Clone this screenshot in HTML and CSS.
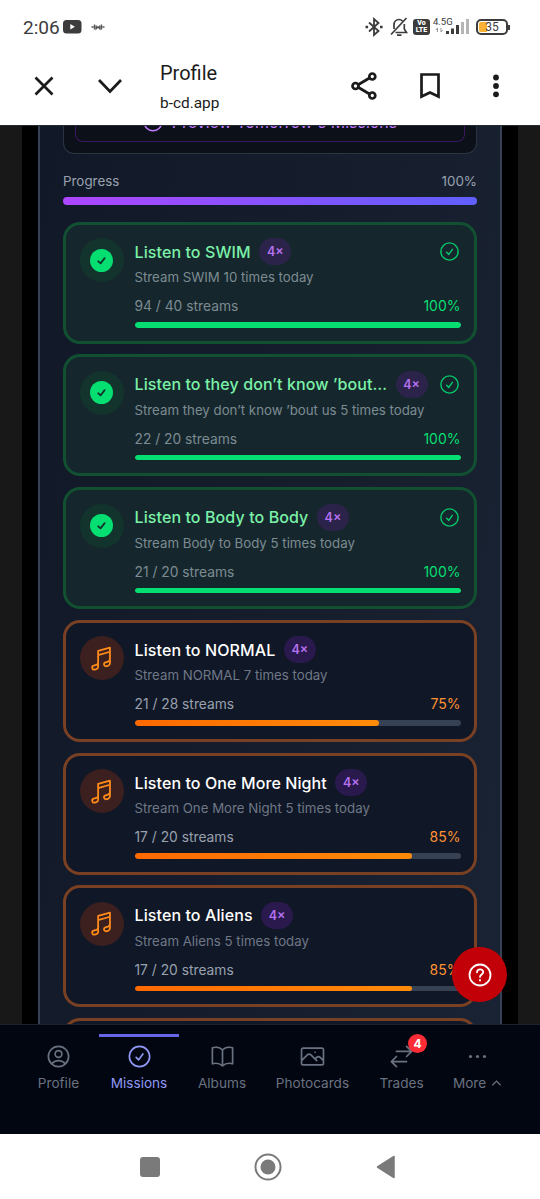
FILE: index.html
```html
<!DOCTYPE html>
<html lang="en">
  <head>
    <meta charset="UTF-8" />
    <meta name="viewport" content="width=device-width, initial-scale=1.0" />
    <title>Profile</title>
    <link rel="stylesheet" href="styles.css">
  </head>
  <body>
    <!-- shared icons -->
    <svg class="defs" width="0" height="0">
      <symbol id="check-circle" viewBox="0 0 24 24">
        <path d="M9 12.75 11.25 15 15 9.75M21 12a9 9 0 1 1-18 0 9 9 0 0 1 18 0Z" />
      </symbol>
      <symbol id="check-solid" viewBox="0 0 24 24">
        <circle cx="12" cy="12" r="12" fill="#05df72" stroke="none" />
        <path d="M8.5 12.8 11 15 15.3 9.5" fill="none" stroke="#12312b" stroke-width="1.8" />
      </symbol>
      <symbol id="music" viewBox="0 0 24 24">
        <path d="m9 9 10.5-3m0 6.553v3.75a2.25 2.25 0 0 1-1.632 2.163l-1.32.377a1.803 1.803 0 1 1-.99-3.467l2.31-.66a2.25 2.25 0 0 0 1.632-2.163Zm0 0V2.25L9 5.25v10.303m0 0v3.75a2.25 2.25 0 0 1-1.632 2.163l-1.32.377a1.803 1.803 0 0 1-.99-3.467l2.31-.66A2.25 2.25 0 0 0 9 15.553Z" />
      </symbol>
    </svg>

    <header class="status-bar">
      <span class="clock">2:06</span>
      <svg class="youtube" width="19" height="14" viewBox="0 0 19 14"><rect width="18.5" height="13.5" rx="3.5" fill="#3c3c3c" /><path d="M7.3 4v5.6l4.6-2.8z" fill="#fff" /></svg>
      <svg class="buds" width="14" height="8" viewBox="0 0 14 8" fill="none" stroke="#555" stroke-width="1.4"><path d="M.5 4h2M11.5 4h2M3.5 1.5v5M5.2 2.5v3.2L7 3.8l1.8 1.9V2.5M10.5 1.5v5" /></svg>
      <div class="status-icons">
        <svg width="18" height="20" viewBox="0 0 18 20" fill="none" stroke="#3c3c3c" stroke-width="1.8"><path d="M4 5.5 13.5 14 9 18V2l4.5 4L4 14.5" /><path d="M.5 10h2.6M15 10h2.6" stroke-width="2.4" /></svg>
        <svg class="bell" width="18" height="20" viewBox="0 0 18 20" fill="none" stroke="#3c3c3c" stroke-width="1.7"><path d="M1 17.5 16.5 1M4 12V8c0-3 2-5.5 5-5.5 1.5 0 2.5.5 3.500 1.500M14.300 7v5l2.200 3.500H5.500M7 18.200h4.500" /></svg>
        <span class="volte"><span>Vo</span><span>LTE</span></span>
        <div class="signal">
          <span>4.5G</span>
          <svg width="36" height="16" viewBox="0 0 36 16"><path d="M3.500 13V9M2 11l1.500-2M7 9v4l1.500-2" fill="none" stroke="#999" /><path d="M12 12h3v3h-3zM17 9.500h3V15h-3zM22 6h3v9h-3z" fill="#3c3c3c" /><path d="M27 3h3v12h-3zM32 0h3v15h-3z" fill="#b5b5b5" /></svg>
        </div>
        <div class="battery"><span>35</span></div>
      </div>
    </header>

    <nav class="browser-bar">
      <svg class="close" width="20" height="20" viewBox="0 0 20 20"><path d="m1.500 1.500 17 17m0-17-17 17" /></svg>
      <svg class="collapse" width="26" height="16" viewBox="0 0 26 16"><path d="m2 2 11 11.500L24 2" /></svg>
      <div class="page-info">
        <div class="page-title">Profile</div>
        <div class="page-url">b-cd.app</div>
      </div>
      <svg class="share" width="27" height="28" viewBox="0 0 27 28"><path d="M5 14 21 4.500M5 14l16 9.500" /><g fill="#fff"><circle cx="4.500" cy="14" r="3" /><circle cx="21.300" cy="4.500" r="3" /><circle cx="21.300" cy="23.500" r="3" /></g></svg>
      <svg class="bookmark" width="20" height="26" viewBox="0 0 20 26"><path d="M1.500 1.500h17v22L10 19.500l-8.500 4z" /></svg>
      <svg class="menu" width="6" height="24" viewBox="0 0 6 24"><g fill="#1b1b1b" stroke="none"><circle cx="3" cy="3.500" r="2.900" /><circle cx="3" cy="12" r="2.900" /><circle cx="3" cy="20.300" r="2.900" /></g></svg>
    </nav>

    <main class="app">
      <div class="panel">
        <div class="preview-box">
          <div class="preview-button">
            <svg width="20" height="20" viewBox="0 0 20 20" fill="none" stroke="#c27aff" stroke-width="1.500"><circle cx="10" cy="10" r="8.800" /><path d="M10 5v5l3 2" /></svg>
            <span>Preview Tomorrow's Missions</span>
          </div>
        </div>

        <div class="progress-head"><span>Progress</span><span>100%</span></div>
        <div class="progress-total"></div>

        <section class="missions">
          <article class="card done">
            <div class="icon"><svg><use href="#check-solid" /></svg></div>
            <div class="body">
              <div class="title-row"><h3>Listen to SWIM</h3><span class="times">4×</span><svg class="status"><use href="#check-circle" /></svg></div>
              <p>Stream SWIM 10 times today</p>
              <div class="stats"><span>94 / 40 streams</span><b>100%</b></div>
              <div class="bar"><div style="width: 100%"></div></div>
            </div>
          </article>
          <article class="card done">
            <div class="icon"><svg><use href="#check-solid" /></svg></div>
            <div class="body">
              <div class="title-row"><h3>Listen to they don’t know ’bout…</h3><span class="times">4×</span><svg class="status"><use href="#check-circle" /></svg></div>
              <p>Stream they don’t know ’bout us 5 times today</p>
              <div class="stats"><span>22 / 20 streams</span><b>100%</b></div>
              <div class="bar"><div style="width: 100%"></div></div>
            </div>
          </article>
          <article class="card done">
            <div class="icon"><svg><use href="#check-solid" /></svg></div>
            <div class="body">
              <div class="title-row"><h3>Listen to Body to Body</h3><span class="times">4×</span><svg class="status"><use href="#check-circle" /></svg></div>
              <p>Stream Body to Body 5 times today</p>
              <div class="stats"><span>21 / 20 streams</span><b>100%</b></div>
              <div class="bar"><div style="width: 100%"></div></div>
            </div>
          </article>
          <article class="card">
            <div class="icon"><svg><use href="#music" /></svg></div>
            <div class="body">
              <div class="title-row"><h3>Listen to NORMAL</h3><span class="times">4×</span></div>
              <p>Stream NORMAL 7 times today</p>
              <div class="stats"><span>21 / 28 streams</span><b>75%</b></div>
              <div class="bar"><div style="width: 75%"></div></div>
            </div>
          </article>
          <article class="card">
            <div class="icon"><svg><use href="#music" /></svg></div>
            <div class="body">
              <div class="title-row"><h3>Listen to One More Night</h3><span class="times">4×</span></div>
              <p>Stream One More Night 5 times today</p>
              <div class="stats"><span>17 / 20 streams</span><b>85%</b></div>
              <div class="bar"><div style="width: 85%"></div></div>
            </div>
          </article>
          <article class="card">
            <div class="icon"><svg><use href="#music" /></svg></div>
            <div class="body">
              <div class="title-row"><h3>Listen to Aliens</h3><span class="times">4×</span></div>
              <p>Stream Aliens 5 times today</p>
              <div class="stats"><span>17 / 20 streams</span><b>85%</b></div>
              <div class="bar"><div style="width: 85%"></div></div>
            </div>
          </article>
          <article class="card"></article>
        </section>
      </div>
      <div class="help">
        <svg width="24" height="24" viewBox="0 0 24 24"><circle cx="12" cy="12" r="10.500" /><path d="M9 9.300c0-3.900 6.200-3.900 6.200-.3 0 2.500-3.200 2.500-3.200 4.900M12 17v.5" /></svg>
      </div>
    </main>

    <nav class="tabs">
      <div class="tab profile">
        <svg viewBox="0 0 24 24"><path d="M17.982 18.725A7.488 7.488 0 0 0 12 15.750a7.488 7.488 0 0 0-5.982 2.975m11.963 0a9 9 0 1 0-11.963 0m11.963 0A8.966 8.966 0 0 1 12 21a8.966 8.966 0 0 1-5.982-2.275M15 9.750a3 3 0 1 1-6 0 3 3 0 0 1 6 0Z" /></svg>
        <span>Profile</span>
      </div>
      <div class="tab missions-tab active">
        <svg><use href="#check-circle" /></svg>
        <span>Missions</span>
      </div>
      <div class="tab albums">
        <svg viewBox="0 0 24 24"><path d="M12 6.042A8.967 8.967 0 0 0 6 3.750c-1.052 0-2.062.18-3 .512v14.250A8.987 8.987 0 0 1 6 18c2.305 0 4.408.867 6 2.292m0-14.250a8.966 8.966 0 0 1 6-2.292c1.052 0 2.062.18 3 .512v14.250A8.987 8.987 0 0 0 18 18a8.967 8.967 0 0 0-6 2.292m0-14.250v14.250" /></svg>
        <span>Albums</span>
      </div>
      <div class="tab photocards">
        <svg viewBox="0 0 24 24"><path d="m2.250 15.750 5.159-5.159a2.250 2.250 0 0 1 3.182 0l5.159 5.159m-1.500-1.500 1.409-1.409a2.250 2.250 0 0 1 3.182 0l2.909 2.909m-18 3.750h16.500a1.500 1.500 0 0 0 1.500-1.500V6a1.500 1.500 0 0 0-1.500-1.500H3.750A1.500 1.500 0 0 0 2.250 6v12a1.500 1.500 0 0 0 1.500 1.500Zm10.500-11.250h.008v.008h-.008V8.250Z" /></svg>
        <span>Photocards</span>
      </div>
      <div class="tab trades">
        <svg viewBox="0 0 24 24"><path d="M7.500 21 3 16.500m0 0L7.500 12M3 16.500h13.500m0-13.500L21 7.500m0 0L16.500 12M21 7.500H7.500" /></svg>
        <span>Trades</span>
        <i class="count">4</i>
      </div>
      <div class="tab more">
        <svg viewBox="0 0 24 24"><g fill="#6a7282" stroke="none"><circle cx="5.800" cy="12" r="1.400" /><circle cx="12" cy="12" r="1.400" /><circle cx="18.200" cy="12" r="1.400" /></g></svg>
        <span>More <svg class="caret" viewBox="0 0 12 8"><path d="m1.500 6.500 4.500-4.500 4.500 4.500" /></svg></span>
      </div>
    </nav>

    <footer class="system-nav">
      <svg width="20" height="20" viewBox="0 0 20 20"><rect width="20" height="20" rx="3" fill="#7a7a7a" /></svg>
      <svg width="28" height="28" viewBox="0 0 28 28"><circle cx="14" cy="14" r="12.500" fill="none" stroke="#7a7a7a" stroke-width="2" /><circle cx="14" cy="14" r="7.500" fill="#7a7a7a" /></svg>
      <svg width="20" height="24" viewBox="0 0 20 24"><path d="M18 1.500v21L1.500 12z" fill="#7a7a7a" stroke="#7a7a7a" stroke-width="1.500" stroke-linejoin="round" /></svg>
    </footer>
  </body>
</html>
```
FILE: styles.css
```css
* {
  box-sizing: border-box;
}
body {
  margin: 0;
  width: 540px;
  height: 1199px;
  overflow: hidden;
  background: #fff;
  font-family: Inter, "Open Sans", sans-serif;
}
svg {
  display: block;
  flex: none;
}
.defs {
  position: absolute;
}

/* phone status bar */
.status-bar {
  height: 50px;
  padding: 4px 32px 0 23px;
  display: flex;
  align-items: center;
  font-family: Roboto, sans-serif;
  color: #3c3c3c;
}
.clock {
  width: 40px;
  font-size: 19px;
}
.buds {
  margin-left: 9px;
}
.status-icons {
  margin-left: auto;
  display: flex;
  align-items: center;
}
.bell {
  margin-left: 7px;
}
.volte {
  width: 17px;
  height: 16px;
  margin-left: 5px;
  border-radius: 3px;
  background: #3c3c3c;
  color: #fff;
  font-size: 7px;
  font-weight: 900;
  line-height: 7px;
  display: flex;
  flex-direction: column;
  align-items: center;
  justify-content: center;
}
.signal {
  position: relative;
  margin-left: 4px;
}
.signal span {
  position: absolute;
  left: -1px;
  top: -2px;
  font-size: 9.5px;
  line-height: 10px;
}
.battery {
  position: relative;
  width: 32px;
  height: 16px;
  margin-left: 6px;
  border: 2px solid #3c3c3c;
  border-radius: 5px;
  background: linear-gradient(90deg, #f9b233 9px, #fff 9px);
  background-clip: content-box;
  padding: 1px;
  font-size: 12px;
  line-height: 11px;
  text-align: center;
}
.battery::after {
  content: "";
  position: absolute;
  right: -4px;
  top: 4px;
  width: 2px;
  height: 5px;
  background: #3c3c3c;
}

/* in-app browser toolbar */
.browser-bar {
  height: 75px;
  padding: 0 41px 0 34px;
  display: flex;
  align-items: center;
  font-family: Roboto, sans-serif;
  color: #1b1b1b;
}
.browser-bar svg {
  fill: none;
  stroke: #1b1b1b;
  stroke-width: 2.7;
  position: relative;
  top: -2px;
}
.collapse {
  margin-left: 43px;
}
.page-info {
  flex: 1;
  margin-left: 37px;
}
.page-title {
  font-size: 20px;
  line-height: 24px;
  margin-top: -1px;
}
.page-url {
  font-size: 15.4px;
  line-height: 20px;
  margin-top: 8px;
}
.bookmark {
  margin-left: 42px;
}
.menu {
  margin-left: 53px;
}

/* page content */
.app {
  position: relative;
  height: 899px;
  overflow: hidden;
  border-top: 1px solid #252b33;
  background: linear-gradient(90deg, #181818 22px, #000 22px, #000 518px, #181818 518px);
}
.panel {
  width: 464px;
  height: 920px;
  margin: 0 auto;
  padding: 0 23px;
  border: solid #364153;
  border-width: 0 2px;
  background: linear-gradient(100deg, #111827, #1a2333);
}
.preview-box {
  height: 28px;
  padding: 0 11px;
  border: 1px solid #2c3442;
  border-top: none;
  border-radius: 0 0 11px 11px;
  background: #0c1019;
}
.preview-button {
  height: 16px;
  padding-bottom: 9px;
  border: 1px solid #3b1762;
  border-top: none;
  border-radius: 0 0 8px 8px;
  display: flex;
  align-items: flex-end;
  justify-content: center;
  gap: 9px;
  color: #c27aff;
  font-size: 16px;
  line-height: 20px;
}
.progress-head {
  display: flex;
  justify-content: space-between;
  margin-top: 17px;
  font-size: 13.4px;
  line-height: 20px;
  color: #99a1af;
}
.progress-total {
  height: 8px;
  margin-top: 6px;
  border-radius: 4px;
  background: linear-gradient(90deg, #ad46ff, #615fff);
}
.missions {
  margin-top: 16.5px;
  display: grid;
  gap: 10.8px;
}
.card {
  height: 122px;
  padding: 13.5px;
  border: 3px solid #7a4024;
  border-radius: 17px;
  background: #101726;
  display: flex;
  gap: 11px;
}
.card.done {
  border-color: #125032;
  background: #15272d;
}
.icon {
  flex: none;
  width: 44px;
  height: 44px;
  border-radius: 50%;
  background: #3b201f;
  display: flex;
  align-items: center;
  justify-content: center;
}
.icon svg {
  width: 27px;
  height: 27px;
  fill: none;
  stroke: #ff8b1a;
  stroke-width: 1.6;
  stroke-linecap: round;
  stroke-linejoin: round;
}
.done .icon {
  background: #13342d;
}
.done .icon svg {
  width: 23px;
  height: 23px;
}
.body {
  flex: 1;
  min-width: 0;
}
.title-row {
  height: 27px;
  display: flex;
  align-items: center;
}
h3 {
  margin: 0;
  font-size: 16px;
  font-weight: 500;
  letter-spacing: 0.1px;
  line-height: 24px;
  color: #fff;
  white-space: nowrap;
}
.done h3 {
  color: #7bf1a8;
}
.times {
  flex: none;
  width: 32px;
  height: 27px;
  margin-left: 8.5px;
  border-radius: 14px;
  background: #2a194d;
  color: #b571f0;
  font-size: 12.5px;
  font-weight: 600;
  line-height: 27px;
  text-align: center;
}
.done .times {
  background: #2b2349;
}
.status {
  width: 23px;
  height: 23px;
  margin-left: auto;
  fill: none;
  stroke: #05c96a;
  stroke-width: 1.5;
  stroke-linecap: round;
  stroke-linejoin: round;
}
.card p {
  margin: 2px 0 0;
  font-size: 13.25px;
  line-height: 21px;
  color: #6f7887;
  white-space: nowrap;
}
.stats {
  display: flex;
  justify-content: space-between;
  margin-top: 8px;
  font-size: 13.8px;
  line-height: 20px;
  color: #99a1af;
}
.stats b {
  font-size: 14px;
  font-weight: 400;
  color: #ff9233;
}
.done p,
.done .stats {
  color: #7d8b92;
}
.done .stats b {
  color: #05df72;
}
.bar {
  height: 5.5px;
  margin-top: 6px;
  border-radius: 3px;
  background: #364153;
  overflow: hidden;
}
.bar div {
  height: 100%;
  border-radius: 3px;
  background: linear-gradient(90deg, #ff6900, #ff8b0a);
}
.done .bar div {
  background: #05df72;
}
.help {
  position: absolute;
  right: 33px;
  bottom: 22px;
  width: 55px;
  height: 55px;
  border-radius: 50%;
  background: #c10007;
  display: flex;
  align-items: center;
  justify-content: center;
}
.help svg {
  fill: none;
  stroke: #fff;
  stroke-width: 1.8;
  stroke-linecap: round;
}

/* bottom tabs */
.tabs {
  height: 110px;
  padding: 9px 27px 0 27px;
  border-top: 1px solid #1c2330;
  background: #020610;
  display: flex;
  color: #6a7282;
  font-size: 13.6px;
}
.tab {
  position: relative;
  height: 62px;
  padding-top: 6px;
  border-top: 3px solid transparent;
  display: flex;
  flex-direction: column;
  align-items: center;
  line-height: 20px;
}
.tab > svg {
  width: 27px;
  height: 27px;
  fill: none;
  stroke: #6a7282;
  stroke-width: 1.5;
  stroke-linecap: round;
  stroke-linejoin: round;
}
.tab > span {
  margin-top: 3px;
  display: flex;
  align-items: center;
  gap: 5px;
}
.profile {
  width: 63px;
}
.missions-tab {
  width: 80px;
  margin-left: 9px;
}
.albums {
  width: 86px;
}
.photocards {
  width: 95px;
}
.trades {
  width: 83px;
}
.more {
  width: 69px;
}
.active {
  border-color: #6866e8;
  color: #8f98f5;
}
.active > svg {
  stroke: #8f98f5;
}
.count {
  position: absolute;
  top: -3px;
  right: 16px;
  width: 19px;
  height: 19px;
  border-radius: 50%;
  background: #fb2c36;
  color: #fff;
  font-size: 12px;
  font-style: normal;
  font-weight: 700;
  line-height: 19px;
  text-align: center;
}
.caret {
  width: 11px;
  height: 8px;
  fill: none;
  stroke: #6a7282;
  stroke-width: 1.3;
}

/* android buttons */
.system-nav {
  height: 65px;
  padding: 0 144px 0 140px;
  display: flex;
  align-items: center;
  justify-content: space-between;
}
```
